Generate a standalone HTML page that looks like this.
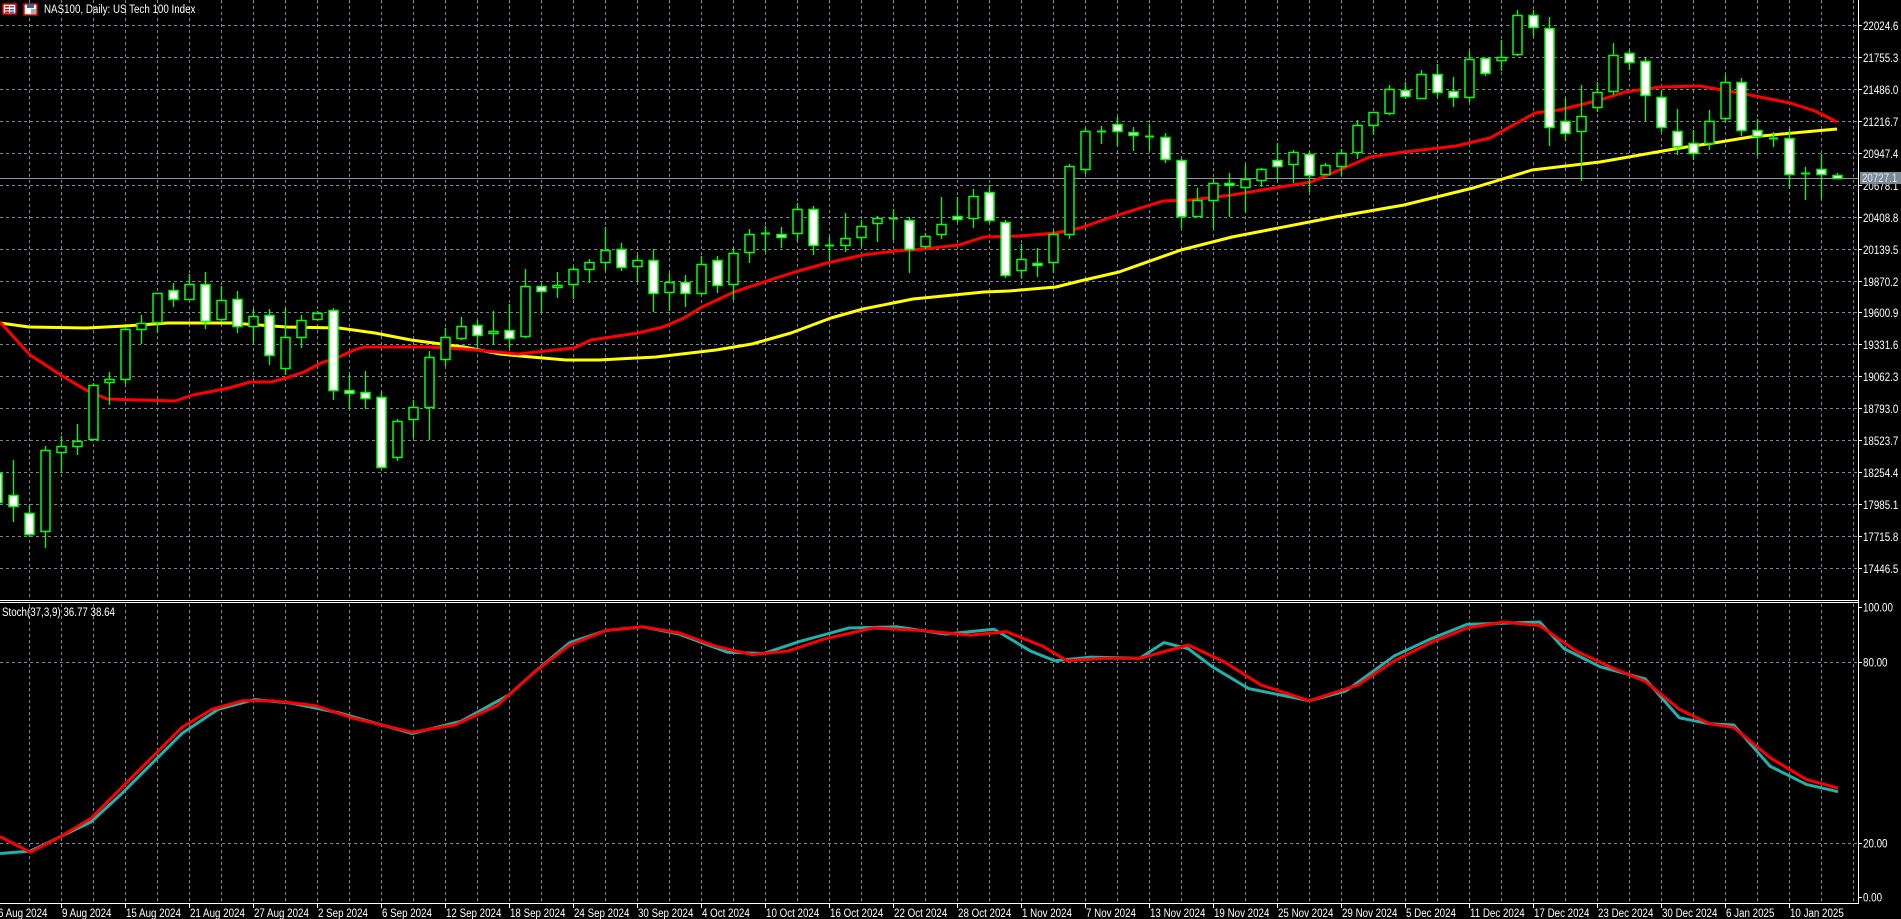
<!DOCTYPE html>
<html><head><meta charset="utf-8"><style>
html,body{margin:0;padding:0;background:#000;width:1901px;height:919px;overflow:hidden}
svg{display:block}
text{font-family:"Liberation Sans","DejaVu Sans",sans-serif;font-size:11.5px;fill:#fff}
</style></head><body>
<svg id="s" width="1901" height="919" viewBox="0 0 1901 919" xmlns="http://www.w3.org/2000/svg">
<rect width="1901" height="919" fill="#000"/>
<g id="grid"></g>
<g id="ma"></g>
<g id="cs"></g>
<g id="st"></g>
<g id="ax"></g>
<rect x="3" y="4" width="13" height="10" fill="#fff" stroke="#e00" stroke-width="1.5"/>
<rect x="5" y="6" width="4" height="1.5" fill="#e00"/><rect x="5" y="9" width="4" height="1.5" fill="#e00"/><rect x="5" y="11.5" width="4" height="1.5" fill="#e00"/>
<rect x="10" y="6" width="4" height="1.5" fill="#36c"/><rect x="10" y="9" width="4" height="1.5" fill="#36c"/><rect x="10" y="11.5" width="4" height="1.5" fill="#36c"/>
<rect x="24" y="4" width="13" height="11" fill="#fff" stroke="#e00" stroke-width="1.5"/>
<rect x="27" y="4" width="7" height="4" fill="#369"/>
<rect x="31" y="9" width="5" height="5" fill="#aaa"/>
<text class="c" x="44" y="13">NAS100, Daily:  US Tech 100 Index</text>
<text class="c" x="2" y="616">Stoch(37,3,9) 36.77 38.64</text>
</svg>
<script>
var NS="http://www.w3.org/2000/svg";
function el(p,t,a){var e=document.createElementNS(NS,t);for(var k in a)e.setAttribute(k,a[k]);document.getElementById(p).appendChild(e);return e;}
function tx(p,x,y,s,st){var t=el(p,"text",{x:x,y:y,"class":"c"});if(st)t.setAttribute("style",st);t.textContent=s;return t;}
var G="#7d8896";
for(var x=29;x<1858;x+=32){el("grid","line",{x1:x+.5,y1:0,x2:x+.5,y2:600,stroke:G,"stroke-dasharray":"3,3"});el("grid","line",{x1:x+.5,y1:604,x2:x+.5,y2:903,stroke:G,"stroke-dasharray":"3,3"});}
var prices=["22024.6","21755.3","21486.0","21216.7","20947.4","20678.1","20408.8","20139.5","19870.2","19600.9","19331.6","19062.3","18793.0","18523.7","18254.4","17985.1","17715.8","17446.5"];
for(var n=0;n<18;n++){var y=Math.round(25+31.94*n)+.5;el("grid","line",{x1:0,y1:y,x2:1858,y2:y,stroke:G,"stroke-dasharray":"3,3"});
el("ax","line",{x1:1858,y1:y,x2:1862,y2:y,stroke:"#fff"});tx("ax",1863,y+4.5,prices[n]);}
[662.5,843.5].forEach(function(y){el("grid","line",{x1:0,y1:y,x2:1858,y2:y,stroke:G,"stroke-dasharray":"3,3"});});
[[607,"100.00"],[662,"80.00"],[843,"20.00"],[897,"0.00"]].forEach(function(a){el("ax","line",{x1:1858,y1:a[0]+.5,x2:1862,y2:a[0]+.5,stroke:"#fff"});tx("ax",1863,a[0]+4.5,a[1]);});
el("grid","line",{x1:0,y1:178.5,x2:1858,y2:178.5,stroke:"#8a96a3"});
el("ax","line",{x1:1858.5,y1:0,x2:1858.5,y2:904,stroke:"#fff"});
el("ax","line",{x1:0,y1:600.5,x2:1858,y2:600.5,stroke:"#fff"});
el("ax","line",{x1:0,y1:602.5,x2:1858,y2:602.5,stroke:"#fff"});
el("ax","line",{x1:0,y1:903.5,x2:1859,y2:903.5,stroke:"#fff"});
el("ax","rect",{x:1860,y:172,width:41,height:12,fill:"#7b8a99"});
tx("ax",1862,182,"20727.1","fill:#e8e8e8");
var dates=["6 Aug 2024","9 Aug 2024","15 Aug 2024","21 Aug 2024","27 Aug 2024","2 Sep 2024","6 Sep 2024","12 Sep 2024","18 Sep 2024","24 Sep 2024","30 Sep 2024","4 Oct 2024","10 Oct 2024","16 Oct 2024","22 Oct 2024","28 Oct 2024","1 Nov 2024","7 Nov 2024","13 Nov 2024","19 Nov 2024","25 Nov 2024","29 Nov 2024","5 Dec 2024","11 Dec 2024","17 Dec 2024","23 Dec 2024","30 Dec 2024","6 Jan 2025","10 Jan 2025"];
for(var k=0;k<dates.length;k++){var x=-3+64*k;el("ax","line",{x1:x+.5,y1:903,x2:x+.5,y2:908,stroke:"#fff"});tx("ax",x+1,917,dates[k]);}
function pl(g,pts,c,w,s){el(g,"polyline",{points:pts.map(function(p){return (p[0]*s)+","+(p[1]*s)}).join(" "),fill:"none",stroke:c,"stroke-width":w,"stroke-linejoin":"round"});}
var red=[[0,322],[30,355],[64,377],[86,390],[107,399],[175,401],[193,395],[229,388],[250,382],[271,382],[286,378],[304,372],[321,363],[339,357],[354,350],[364,347],[429,347],[464,349],[518,354],[574,348],[591,340],[638,333],[663,327],[684,318],[702,307],[734,292],[770,280],[795,272],[827,263],[863,255],[895,251],[924,249],[959,245],[984,237],[1020,236],[1056,233],[1080,228],[1112,217],[1163,201],[1191,200],[1232,195],[1311,182],[1370,157],[1404,152],[1456,146],[1490,138],[1535,113],[1559,110],[1600,100],[1625,92],[1660,87],[1700,86],[1750,95],[1790,103],[1815,111],[1837,122]];
var yel=[[0,323],[29,327],[86,328],[125,326],[168,323],[232,323],[286,327],[339,328],[375,333],[411,340],[464,347],[500,354],[520,356],[566,360],[599,360],[656,357],[716,350],[752,344],[791,333],[831,318],[863,309],[913,299],[984,292],[1009,291],[1056,287],[1080,281],[1119,272],[1181,250],[1232,237],[1335,217],[1404,205],[1473,188],[1532,170],[1600,162],[1640,155],[1680,148],[1720,142],[1750,137],[1837,129]];
pl("ma",yel,"#ffff00",3,1);pl("ma",red,"#ff0000",3,1);
var C=[[-1,473,502,465,510,1],[0,495,506,460,522,1],[1,513,534,505,537,1],[2,450,531,446,548,0],[3,446,452,436,473,0],[4,441,446,424,455,0],[5,385,439,383,440,0],[6,379,382,372,405,0],[7,329,379,327,384,0],[8,323,329,315,344,0],[9,293,322,293,333,0],[10,290,299,283,307,1],[11,284,299,274,300,0],[12,284,321,272,329,1],[13,300,319,286,322,0],[14,299,326,291,333,1],[15,316,326,309,343,0],[16,315,355,309,365,1],[17,337,368,308,375,0],[18,320,337,315,348,0],[19,313,319,311,320,0],[20,310,390,308,400,1],[21,390,393,375,409,1],[22,392,398,371,409,1],[23,397,467,392,469,1],[24,421,457,419,461,0],[25,407,419,400,438,0],[26,357,407,351,440,0],[27,337,359,328,366,0],[28,326,338,317,340,0],[29,325,335,320,349,1],[30,331,333,311,345,0],[31,330,338,304,348,1],[32,286,336,269,338,0],[33,286,291,285,312,1],[34,285,287,272,298,0],[35,269,284,267,299,0],[36,262,269,259,283,0],[37,250,262,227,271,0],[38,249,267,243,271,1],[39,260,266,255,282,0],[40,260,293,249,312,1],[41,282,292,273,311,0],[42,282,293,275,307,1],[43,264,293,256,295,0],[44,260,285,256,293,1],[45,253,284,248,300,0],[46,234,252,229,263,0],[47,233,234,226,252,0],[48,234,237,227,248,1],[49,209,233,203,241,0],[50,209,245,206,255,1],[51,245,246,237,261,0],[52,238,245,213,252,0],[53,226,237,220,247,0],[54,218,223,216,242,0],[55,218,219,209,240,0],[56,220,249,217,273,1],[57,236,246,233,249,0],[58,224,234,197,239,0],[59,216,219,197,222,1],[60,196,218,189,228,0],[61,192,220,185,223,1],[62,222,275,220,278,1],[63,259,270,244,278,0],[64,263,265,248,277,1],[65,234,262,231,273,0],[66,166,234,164,239,0],[67,131,169,128,174,0],[68,131,132,126,144,0],[69,124,131,117,146,1],[70,132,135,127,151,1],[71,136,137,124,151,1],[72,137,159,133,163,1],[73,160,216,159,228,1],[74,200,216,188,217,0],[75,183,200,179,229,0],[76,183,185,173,217,1],[77,179,187,165,213,0],[78,169,180,168,187,0],[79,160,166,143,181,1],[80,152,164,150,183,0],[81,154,175,152,192,1],[82,165,174,163,175,0],[83,153,166,149,176,0],[84,125,152,120,159,0],[85,112,125,112,135,0],[86,89,113,85,115,0],[87,90,96,82,99,1],[88,74,98,70,99,0],[89,74,92,64,97,1],[90,91,97,77,107,1],[91,59,97,51,102,0],[92,58,73,58,76,1],[93,57,60,40,71,0],[94,15,54,10,56,0],[95,15,27,10,36,1],[96,28,127,17,146,1],[97,121,133,98,141,1],[98,116,131,85,181,0],[99,92,107,82,112,0],[100,55,91,43,95,0],[101,53,62,50,70,1],[102,61,95,57,121,1],[103,97,127,90,132,1],[104,131,146,109,155,1],[105,143,153,130,160,1],[106,121,143,110,150,0],[107,82,118,75,122,0],[108,82,130,78,136,1],[109,130,136,119,156,1],[110,138,139,132,147,0],[111,138,174,129,188,1],[112,173,174,167,200,0],[113,169,174,154,199,1],[114,175,178,173,179,1]];
C.forEach(function(c){var x=13+16*c[0];
el("cs","line",{x1:x+.5,y1:c[3],x2:x+.5,y2:c[4],stroke:"#00ff00","stroke-width":1.3});
var h=c[2]-c[1];
if(h<2){el("cs","line",{x1:x-4,y1:c[1]+.5,x2:x+5,y2:c[1]+.5,stroke:"#00ff00","stroke-width":2});}
else el("cs","rect",{x:x-4,y:c[1]+.5,width:9,height:h,fill:c[5]?"#fff":"#000",stroke:"#00ff00","stroke-width":1.5});});
var sr=[[0,690],[25,703],[50,690],[75,675],[100,650],[125,625],[150,600],[175,585],[200,578],[225,578],[260,582],[290,592],[340,604],[375,598],[410,582],[440,555],[470,532],[500,520],[530,517],[560,522],[590,533],[620,540],[650,537],[680,527],[720,518],[760,520],[800,524],[830,521],[860,533],[880,545],[910,543],[940,543],[980,532],[1010,546],[1040,565],[1080,578],[1120,565],[1150,545],[1180,530],[1210,518],[1240,513],[1270,516],[1300,537],[1330,551],[1357,562],[1385,585],[1410,597],[1430,600],[1460,625],[1490,643],[1516,650]];
var sc=[[0,704],[25,702],[50,690],[75,678],[100,655],[125,630],[150,605],[180,585],[210,577],[240,580],[280,588],[340,605],[380,595],[420,573],[440,555],[470,530],[500,520],[530,517],[560,523],[600,538],[630,539],[660,529],[700,518],[740,517],[780,523],[820,519],[850,537],[870,545],[900,542],[940,543],[960,530],[980,535],[1000,550],[1030,568],[1080,578],[1110,570],[1150,541],[1180,527],[1210,515],[1270,513],[1290,535],[1320,550],[1357,560],[1385,592],[1410,597],[1430,598],[1460,632],[1490,647],[1516,653]];
pl("st",sc,"#20b2aa",3,1.2124);pl("st",sr,"#ff0000",3,1.2124);
// condense text to match narrow Tahoma-like metrics
var ts=document.querySelectorAll("text.c");
for(var i=0;i<ts.length;i++){try{var L=ts[i].getComputedTextLength();ts[i].setAttribute("textLength",(L*0.85).toFixed(1));ts[i].setAttribute("lengthAdjust","spacingAndGlyphs");}catch(e){}}
</script>
</body></html>
